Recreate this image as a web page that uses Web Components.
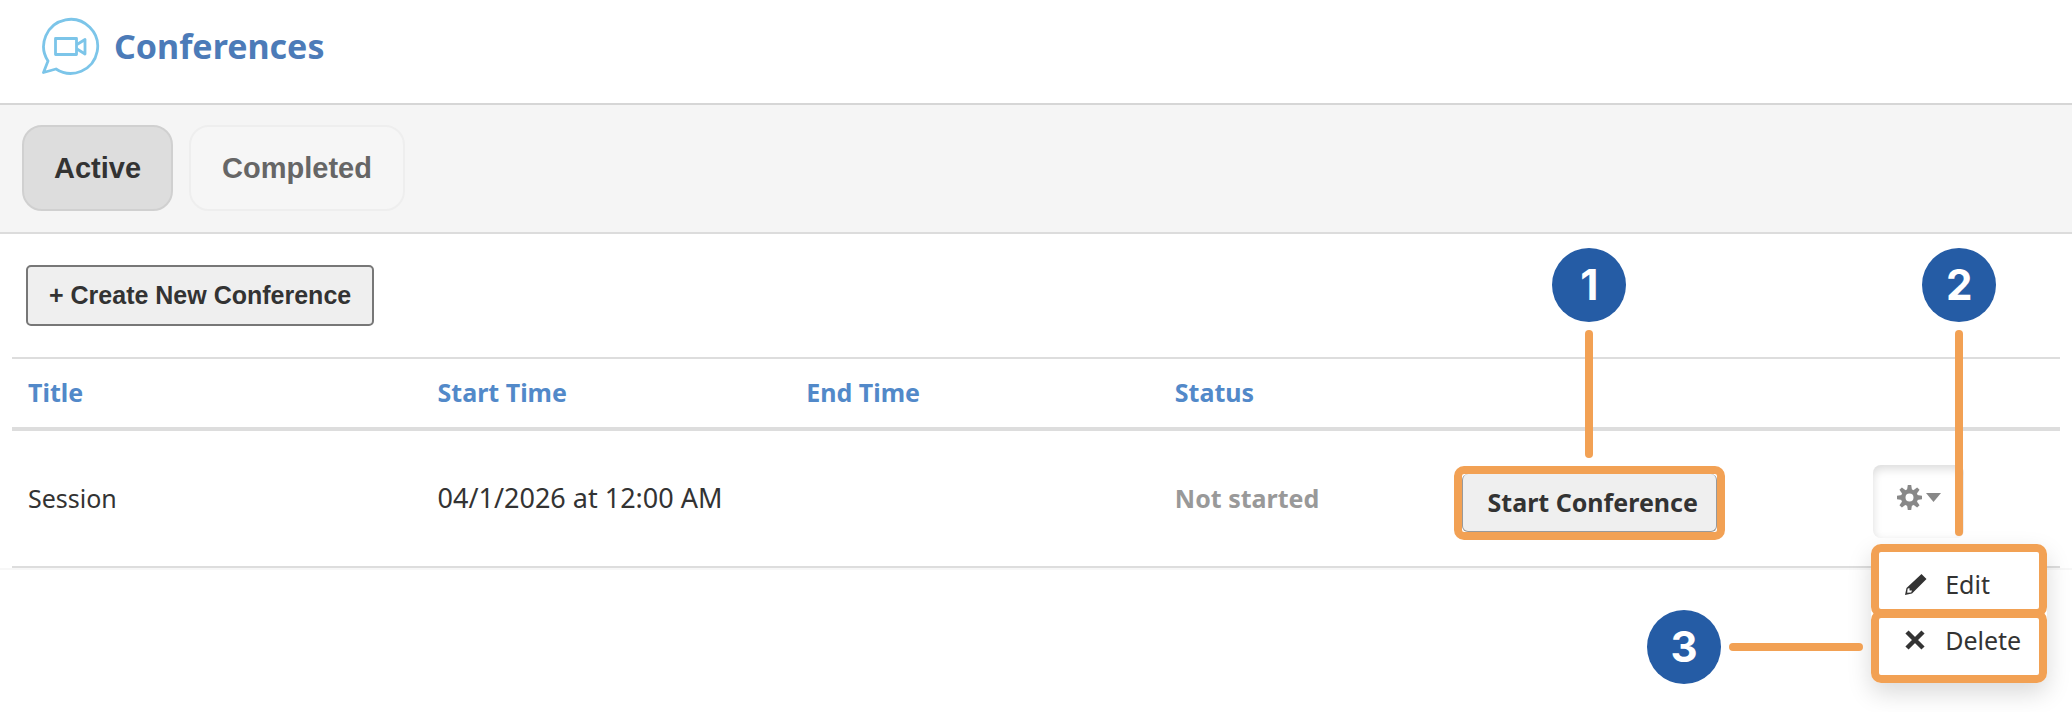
<!DOCTYPE html>
<html lang="en">
<head>
<meta charset="utf-8">
<meta name="viewport" content="width=device-width, initial-scale=1">
<title>Conferences</title>
<style>
    body {
        margin: 0;
        min-height: 100vh;
        background: #fff;
        color: #333;
        font-family: "Noto Sans", sans-serif;
        font-size: 25px;
        line-height: 36px;
    }
</style>
</head>
<body>

<page-header>Conferences</page-header>

<tab-bar>
    <tab-button active>Active</tab-button>
    <tab-button>Completed</tab-button>
</tab-bar>

<conference-list>
    <create-button slot="toolbar">+ Create New Conference</create-button>
</conference-list>

<script>
// Page header: logo + title

class PageHeader extends HTMLElement {
    constructor() {
        super();
        this.attachShadow({ mode: 'open' });
    }
    connectedCallback() {
        this.shadowRoot.innerHTML = `
        <style>
            :host { display: block; border-bottom: 2px solid #d6d6d6; }
            header { display: flex; align-items: center; gap: 14px; padding: 16px 40px 27px; }
            svg { flex: none; width: 60px; height: 60px; }
            h1 { margin: 0; font-size: 34px; line-height: 40px; color: #4c7bb8; }
        </style>
        <header>
            <svg viewBox="0 0 60 60" fill="none" stroke="#7cc5e9" stroke-width="2.800" stroke-linejoin="round" aria-hidden="true">
                <path d="M8 45 L3.500 56.500 L16 53 A27 27 0 1 0 8 45 Z"/>
                <path d="M15.500 22.500 H36.500 V38.500 H15.500 Z"/>
                <path d="M37 28.500 L45 23.500 V38 L37 33"/>
            </svg>
            <h1><slot></slot></h1>
        </header>`;
    }
}
customElements.define('page-header', PageHeader);


// Tabs

class TabBar extends HTMLElement {
    constructor() {
        super();
        this.attachShadow({ mode: 'open' });
    }
    connectedCallback() {
        this.shadowRoot.innerHTML = `
        <style>
            :host { display: block; background: #f5f5f5; border-bottom: 2px solid #dcdcdc; }
            nav { display: flex; gap: 16px; padding: 20px 22px 21px; }
        </style>
        <nav><slot></slot></nav>`;
    }
}
customElements.define('tab-bar', TabBar);


class TabButton extends HTMLElement {
    constructor() {
        super();
        this.attachShadow({ mode: 'open' });
    }
    connectedCallback() {
        this.shadowRoot.innerHTML = `
        <style>
            :host { display: block; }
            button {
                padding: 24px 31px;
                border: 2px solid #eee;
                border-radius: 20px;
                background: #f6f6f6;
                color: #666;
                font: bold 29px/34px "Liberation Sans", Arial, sans-serif;
            }
            :host([active]) button {
                padding: 24px 30px;
                border-color: #d0d0d0;
                background: #ddd;
                color: #333;
            }
        </style>
        <button type="button"><slot></slot></button>`;
    }
}
customElements.define('tab-button', TabButton);


class CreateButton extends HTMLElement {
    constructor() {
        super();
        this.attachShadow({ mode: 'open' });
    }
    connectedCallback() {
        this.shadowRoot.innerHTML = `
        <style>
            :host { display: block; }
            button {
                padding: 14px 21px;
                border: 2px solid #777;
                border-radius: 5px;
                background: #efefef;
                color: #333;
                font: bold 25px/29px "Liberation Sans", Arial, sans-serif;
            }
        </style>
        <button type="button"><slot></slot></button>`;
    }
}
customElements.define('create-button', CreateButton);


// Orange frame with a numbered circle. side = top | left, length = connector length

class CalloutFrame extends HTMLElement {
    constructor() {
        super();
        this.attachShadow({ mode: 'open' });
    }
    connectedCallback() {
        const number = this.getAttribute('number');
        const length = this.getAttribute('length') || '128';

        this.shadowRoot.innerHTML = `
        <style>
            :host {
                display: block;
                position: relative;
                border: 8px solid #f2a154;
                border-radius: 10px;
                --length: ${length}px;
            }
            .callout { position: absolute; z-index: 2; display: flex; align-items: center; gap: 8px; }
            .number {
                flex: none;
                width: 74px;
                border-radius: 50%;
                background: #255ca5;
                color: #fff;
                font: bold 42px/74px Inter, sans-serif;
                text-align: center;
            }
            .line { flex: none; border-radius: 4px; background: #f2a154; }

            :host([side="top"]) .callout {
                flex-direction: column;
                bottom: calc(100% + 16px);
                left: 50%;
                transform: translateX(-50%);
            }
            :host([side="top"]) .line { width: 8px; height: var(--length); }

            :host([side="left"]) .callout {
                right: calc(100% + 16px);
                top: 50%;
                transform: translateY(-50%);
            }
            :host([side="left"]) .line { width: var(--length); height: 8px; }
        </style>
        <slot></slot>
        <div class="callout"><span class="number">${number}</span><span class="line"></span></div>`;
    }
}
customElements.define('callout-frame', CalloutFrame);


class StartButton extends HTMLElement {
    constructor() {
        super();
        this.attachShadow({ mode: 'open' });
    }
    connectedCallback() {
        this.shadowRoot.innerHTML = `
        <style>
            :host { display: block; }
            button {
                display: block;
                padding: 10px 18px 11px 25px;
                border: 1px solid #999;
                border-top: 0;
                border-radius: 6px;
                background: #efefef;
                color: #333;
                font: inherit;
                font-weight: bold;
                white-space: nowrap;
            }
        </style>
        <button type="button"><slot></slot></button>`;
    }
}
customElements.define('start-button', StartButton);


// Gear button and its opened menu

class GearMenu extends HTMLElement {
    constructor() {
        super();
        this.attachShadow({ mode: 'open' });
    }
    connectedCallback() {
        this.shadowRoot.innerHTML = `
        <style>
            :host { display: inline-block; position: relative; vertical-align: middle; }
            .toggle {
                display: flex;
                gap: 4px;
                padding: 20px 23px 28px 24px;
                border: 0;
                border-radius: 8px;
                background: #fff;
                box-shadow: inset 0 4px 10px rgba(0, 0, 0, .14);
            }
            .toggle svg { display: block; width: 25px; height: 25px; }
            .toggle svg + svg { width: 15px; }
            .menu {
                position: absolute;
                top: calc(100% + 6px);
                left: -2px;
                width: 176px;
                border-radius: 10px;
                background: #fff;
                box-shadow: 0 10px 24px rgba(0, 0, 0, .15);
            }
            .menu callout-frame + callout-frame { margin-top: -7px; }
            .item {
                display: flex;
                align-items: center;
                gap: 18px;
                width: 100%;
                padding: 14px 0 7px 26px;
                border: 0;
                background: none;
                color: #333;
                font: inherit;
            }
            .item.delete { padding: 4px 0 17px 26px; }
            .item svg { flex: none; width: 22px; height: 22px; }
        </style>
        <button class="toggle" type="button" aria-label="Conference actions" aria-expanded="true">
            <svg viewBox="0 0 25 25" aria-hidden="true">
                <g fill="#888">
                    <path id="t" d="M10.800 0 H14.200 L15 5 H10 Z"/>
                    <use href="#t" transform="rotate(45 12.500 12.500)"/>
                    <use href="#t" transform="rotate(90 12.500 12.500)"/>
                    <use href="#t" transform="rotate(135 12.500 12.500)"/>
                    <use href="#t" transform="rotate(180 12.500 12.500)"/>
                    <use href="#t" transform="rotate(225 12.500 12.500)"/>
                    <use href="#t" transform="rotate(270 12.500 12.500)"/>
                    <use href="#t" transform="rotate(315 12.500 12.500)"/>
                </g>
                <circle cx="12.500" cy="12.500" r="6.300" fill="none" stroke="#888" stroke-width="4.600"/>
            </svg>
            <svg viewBox="0 0 15 25" aria-hidden="true"><path fill="#888" d="M0 8 H15 L7.500 17 Z"/></svg>
        </button>
        <div class="menu">
            <callout-frame number="2" side="top" length="206">
                <button class="item" type="button">
                    <svg viewBox="0 0 22 22" aria-hidden="true">
                        <path fill="#333" fill-rule="evenodd" d="M16.500 1 L21.500 6 L7 20.500 L0 22 L1.500 15 Z M2.600 15.800 L2.200 19.800 L6.200 19.400 L7 17.600 L4.600 17.400 L4.400 15 Z"/>
                    </svg>
                    Edit
                </button>
            </callout-frame>
            <callout-frame number="3" side="left" length="134">
                <button class="item delete" type="button">
                    <svg viewBox="0 0 22 22" aria-hidden="true">
                        <path stroke="#333" stroke-width="4.500" d="M2 3 L18 19 M18 3 L2 19"/>
                    </svg>
                    Delete
                </button>
            </callout-frame>
        </div>`;
    }
}
customElements.define('gear-menu', GearMenu);


class ConferenceList extends HTMLElement {
    constructor() {
        super();
        this.attachShadow({ mode: 'open' });
    }
    connectedCallback() {
        this.shadowRoot.innerHTML = `
        <style>
            :host { display: block; border-bottom: 2px solid #f7f7f7; }
            .toolbar { padding: 31px 26px; }
            .list { padding: 0 12px; }
            table { width: 100%; table-layout: fixed; border-collapse: separate; border-spacing: 0; }
            th, td { box-sizing: border-box; padding: 0 16px 2px; text-align: left; vertical-align: middle; }
            th {
                height: 74px;
                border-top: 2px solid #ddd;
                border-bottom: 4px solid #ddd;
                color: #5289c9;
            }
            td { height: 137px; border-bottom: 2px solid #ddd; }
            .title { width: 20%; }
            .time { width: 18%; }
            .status { width: 14%; }
            .start { width: 20%; }
            td.date { font-size: 27px; white-space: nowrap; }
            td.status { color: #999; font-weight: bold; }
            td.start { padding: 8px 16px 0; }
            td.menu { padding: 6px 18px 0; }
            .start callout-frame { width: fit-content; margin-left: -8px; }
        </style>
        <div class="toolbar"><slot name="toolbar"></slot></div>
        <div class="list">
            <table>
                <thead>
                    <tr>
                        <th class="title">Title</th>
                        <th class="time">Start Time</th>
                        <th class="time">End Time</th>
                        <th class="status">Status</th>
                        <th class="start"></th>
                        <th></th>
                    </tr>
                </thead>
                <tbody>
                    <tr>
                        <td>Session</td>
                        <td class="date">04/1/2026 at 12:00 AM</td>
                        <td></td>
                        <td class="status">Not started</td>
                        <td class="start">
                            <callout-frame number="1" side="top" length="128">
                                <start-button>Start Conference</start-button>
                            </callout-frame>
                        </td>
                        <td class="menu"><gear-menu></gear-menu></td>
                    </tr>
                </tbody>
            </table>
        </div>`;
    }
}
customElements.define('conference-list', ConferenceList);
</script>
</body>
</html>
